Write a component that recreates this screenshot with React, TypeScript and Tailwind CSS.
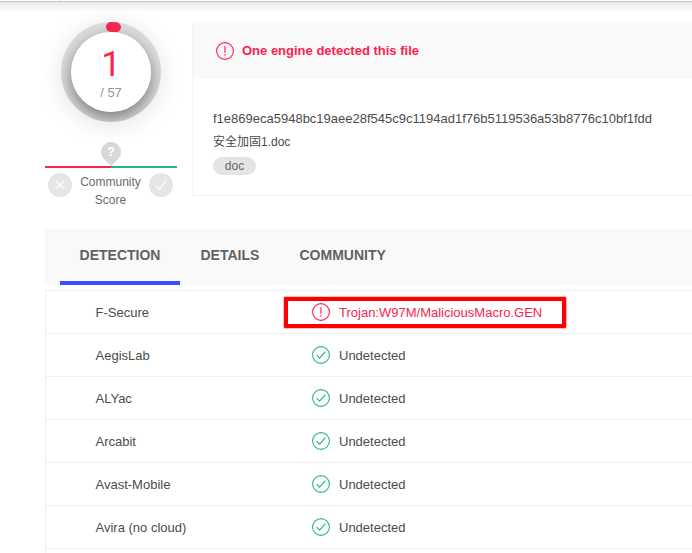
import React from "react";

function AlertIcon() {
  return (
    <svg width="18" height="18" viewBox="0 0 18 18" fill="none" className="block shrink-0" stroke="#fb2350">
      <circle cx="9" cy="9" r="8.4" strokeWidth="1.1" />
      <path d="M9 4.2v6.6M9 12v1.4" strokeWidth="1.2" />
    </svg>
  );
}

function OkIcon() {
  return (
    <svg width="18" height="18" viewBox="0 0 18 18" fill="none" className="block shrink-0" stroke="#2cb97d">
      <circle cx="9" cy="9" r="8.4" strokeWidth="1.1" />
      <path d="M4.6 9.2l3 3L13.3 5.6" strokeWidth="1.2" />
    </svg>
  );
}

function Gauge() {
  return (
    <div className="relative h-[100px] w-[100px] rounded-full bg-[#dcdcdc] p-[10px] shadow-[0_3px_24px_rgba(0,0,0,0.11)]">
      <div className="absolute inset-0 overflow-hidden rounded-full">
        <div className="absolute left-[10px] top-[10px] h-[80px] w-[80px] rounded-full shadow-[0_6px_16px_rgba(0,0,0,0.45)]" />
      </div>
      <svg className="absolute inset-0" width="100" height="100" viewBox="0 0 100 100" fill="none">
        <path d="M50 5A45 45 0 0 1 55 5.28" stroke="#f4284f" strokeWidth="10" strokeLinecap="round" />
      </svg>
      <div className="relative flex h-[80px] w-[80px] flex-col items-center rounded-full bg-white">
        <span className="mt-[12px] font-['Roboto','Liberation_Sans',sans-serif] text-[35px] leading-[41px] text-[#fb2350]">1</span>
        <span className="text-[13px] leading-[15px] text-[#949494]">/ 57</span>
      </div>
    </div>
  );
}

function CommunityScore() {
  return (
    <div className="mt-5 w-[132px]">
      <div className="flex h-6 justify-center">
        <svg width="20" height="24" viewBox="0 0 20 24" className="block">
          <path d="M10 24L2.5 16.6A10 10 0 1 1 17.5 16.6Z" fill="#d8d8d8" />
          <text x="10" y="14.4" textAnchor="middle" fontSize="12" fontWeight="700" fill="#fff">?</text>
        </svg>
      </div>
      <div className="flex h-[2px]">
        <div className="w-1/2 bg-[#fb2350]" />
        <div className="w-1/2 bg-[#25b57a]" />
      </div>
      <div className="flex justify-between pl-[3px] pr-1 pt-[5px]">
        <svg width="24" height="24" viewBox="0 0 24 24" fill="none" stroke="#fff">
          <circle cx="12" cy="12" r="12" fill="#e5e5e5" stroke="none" />
          <path d="M8 8l8 8M16 8l-8 8" strokeWidth="1.1" />
        </svg>
        <div className="text-center text-[12px] leading-[18px] text-[#6b6b6b]">
          Community
          <br />
          Score
        </div>
        <svg width="24" height="24" viewBox="0 0 24 24" fill="none" stroke="#fff">
          <circle cx="12" cy="12" r="12" fill="#e5e5e5" stroke="none" />
          <path d="M7 12.8l3.4 3.6 6.6-8.8" strokeWidth="1.2" />
        </svg>
      </div>
    </div>
  );
}

const engines = [
  { name: "F-Secure", result: "Trojan:W97M/MaliciousMacro.GEN", detected: true },
  { name: "AegisLab", result: "Undetected" },
  { name: "ALYac", result: "Undetected" },
  { name: "Arcabit", result: "Undetected" },
  { name: "Avast-Mobile", result: "Undetected" },
  { name: "Avira (no cloud)", result: "Undetected" },
];

export default function App() {
  return (
    <div className="h-[553px] w-[692px] overflow-hidden bg-white font-['Liberation_Sans','Noto_Sans_CJK_SC',sans-serif] text-[13px] text-[#4c4c4c]">
      <div className="flex h-[22px] flex-col">
        <div className="ml-[60px] h-px border-l border-[#dedede]" />
        <div className="h-px bg-[#c2c6c4]" />
        <div className="h-[10px] bg-linear-to-b from-[#e9e9e9] to-white" />
      </div>
      <div className="flex h-[207px] pl-[45px]">
        <div className="flex w-[147px] flex-col">
          <div className="pl-4">
            <Gauge />
          </div>
          <CommunityScore />
        </div>
        <section className="h-[174px] flex-1 border-b border-l border-[#f4f4f4]">
          <h1 className="flex h-[57px] items-center gap-2 bg-[#f9f9f9] pl-[23px] font-bold text-[#fb2350]">
            <AlertIcon />
            <span>One engine detected this file</span>
          </h1>
          <div className="pl-5 pt-[30px]">
            <p className="leading-5">f1e869eca5948bc19aee28f545c9c1194ad1f76b5119536a53b8776c10bf1fdd</p>
            <p className="mt-[3px] h-5 text-[12px] leading-5">安全加固1.doc</p>
            <span className="mt-[5px] flex h-[18px] w-[43px] items-center justify-center rounded-full bg-[#e4e4e4] text-[12px] text-[#666]">
              doc
            </span>
          </div>
        </section>
      </div>
      <main className="pl-[45px]">
        <nav className="flex h-14 bg-[#f9f9f9] pl-[15px] text-[14px] font-bold leading-[52px] text-[#626262]">
          <div className="w-[120px] border-b-4 border-[#3a4fff] text-center">DETECTION</div>
          <div className="w-[99px] pl-[20.5px]">DETAILS</div>
          <div className="pl-[20.5px]">COMMUNITY</div>
        </nav>
        <div className="mt-[5px] border-l border-t border-[#efefef]">
          {engines.map((e) => (
            <div key={e.name} className="flex h-[43px] items-center border-b border-[#efefef] pl-[49.5px]">
              <div className="w-[216.5px] pt-px leading-5">{e.name}</div>
              <div className={"relative flex items-center gap-[9px] " + (e.detected ? "text-[#fb2350]" : "")}>
                {e.detected ? <AlertIcon /> : <OkIcon />}
                <span className="pt-px leading-5">{e.result}</span>
                {e.detected && (
                  <div className="absolute -left-[28px] -top-[5px] h-[31px] w-[282px] rounded-[1px] border-4 border-[#fe0000] shadow-[0_0_0_1px_rgba(254,0,0,0.25)]" />
                )}
              </div>
            </div>
          ))}
          <div className="h-2" />
        </div>
      </main>
    </div>
  );
}
